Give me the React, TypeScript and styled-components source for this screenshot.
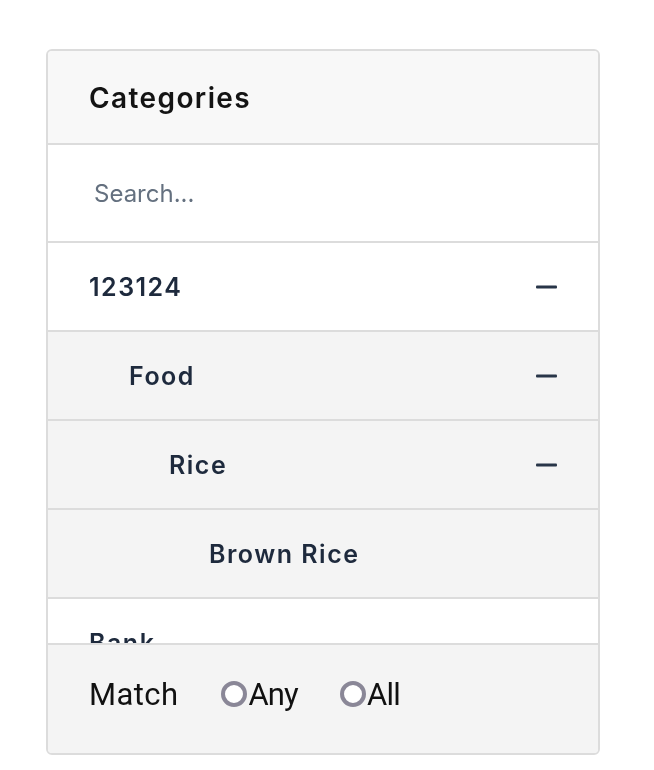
import React from "react";
import styled, { createGlobalStyle } from "styled-components";

const Global = createGlobalStyle`
  html, body { margin: 0; padding: 0; background: #ffffff; }
  * { box-sizing: border-box; }
`;

const Page = styled.div`
  padding: 49px 0 0 46px;
`;

const Card = styled.div`
  width: 554px;
  border: 2px solid #dcdcdc;
  border-radius: 6px;
  overflow: hidden;
  font-family: Inter, "Noto Sans", sans-serif;
`;

const Header = styled.div`
  height: 94px;
  display: flex;
  align-items: center;
  padding: 2px 41px 0;
  background: #f8f8f8;
  border-bottom: 2px solid #dcdcdc;
  font-size: 28px;
  font-weight: 600;
  letter-spacing: 1.4px;
  color: #141414;
`;

const SearchBox = styled.div`
  height: 98px;
  display: flex;
  align-items: center;
  padding: 0 46px;
  border-bottom: 2px solid #dcdcdc;
  background: #ffffff;
`;

const SearchInput = styled.input`
  width: 100%;
  border: none;
  outline: none;
  background: transparent;
  font-family: Inter, "Noto Sans", sans-serif;
  font-size: 24px;
  color: #1e293b;
  padding: 0;
  &::placeholder {
    color: #64707f;
  }
`;

const List = styled.div`
  height: 400px;
  overflow-y: auto;
  scrollbar-width: none;
`;

const Row = styled.div<{ $level: number }>`
  height: 89px;
  display: flex;
  align-items: center;
  justify-content: space-between;
  padding: 0 41px 0 ${(p) => 41 + p.$level * 40}px;
  background: ${(p) => (p.$level > 0 ? "#f4f4f4" : "#ffffff")};
  border-bottom: 2px solid #dcdcdc;
  font-size: 25px;
  font-weight: 600;
  letter-spacing: 1.5px;
  color: #1e2a3d;
`;

const Footer = styled.div`
  height: 110px;
  display: flex;
  align-items: center;
  gap: 43px;
  padding: 0 41px 10px;
  background: #f4f4f4;
  border-top: 2px solid #dcdcdc;
  font-family: Roboto, "Liberation Sans", sans-serif;
  font-size: 31px;
  color: #111111;
`;

const Match = styled.span`
  letter-spacing: 0.4px;
`;

const Options = styled.div`
  display: flex;
  align-items: center;
  gap: 42px;
`;

const Option = styled.label`
  display: flex;
  align-items: center;
  letter-spacing: -0.8px;
`;

const Radio = styled.input`
  appearance: none;
  margin: 0 1px 0 0;
  width: 26px;
  height: 26px;
  border: 4px solid #8a8797;
  border-radius: 50%;
  background: #ffffff;
`;

const Minus = () => (
  <svg width="21" height="4" viewBox="0 0 21 4">
    <rect x="0" y="0.5" width="21" height="3" rx="1" fill="#283548" />
  </svg>
);

const rows = [
  { label: "123124", level: 0, open: true },
  { label: "Food", level: 1, open: true },
  { label: "Rice", level: 2, open: true },
  { label: "Brown Rice", level: 3, open: false },
  { label: "Bank", level: 0, open: false },
];

export default function App() {
  return (
    <>
      <Global />
      <Page>
        <Card>
          <Header>Categories</Header>
          <SearchBox>
            <SearchInput placeholder="Search..." />
          </SearchBox>
          <List>
            {rows.map((r) => (
              <Row key={r.label} $level={r.level}>
                <span>{r.label}</span>
                {r.open && <Minus />}
              </Row>
            ))}
          </List>
          <Footer>
            <Match>Match</Match>
            <Options>
              <Option>
                <Radio type="radio" name="match" />
                Any
              </Option>
              <Option>
                <Radio type="radio" name="match" />
                All
              </Option>
            </Options>
          </Footer>
        </Card>
      </Page>
    </>
  );
}
